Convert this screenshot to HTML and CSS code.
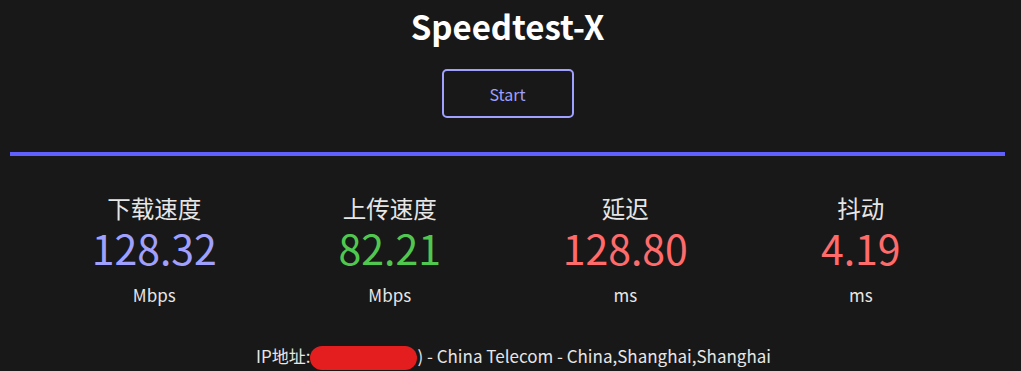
FILE: index.html
```html
<!DOCTYPE html>
<html lang="zh-CN">
<head>
    <meta charset="UTF-8">
    <meta name="viewport" content="width=device-width, initial-scale=1.0">
    <title>Speedtest-X</title>
    <link rel="stylesheet" href="styles.css">
</head>
<body>
    <h1 class="title">Speedtest-X</h1>

    <div class="controls">
        <button type="button" class="start-button">Start</button>
    </div>

    <!-- progress bar -->
    <div class="progress"></div>

    <div class="stats">
        <div class="stat">
            <div class="stat-label">下载速度</div>
            <div class="stat-value download">128.32</div>
            <div class="stat-unit">Mbps</div>
        </div>
        <div class="stat">
            <div class="stat-label">上传速度</div>
            <div class="stat-value upload">82.21</div>
            <div class="stat-unit">Mbps</div>
        </div>
        <div class="stat">
            <div class="stat-label">延迟</div>
            <div class="stat-value ping">128.80</div>
            <div class="stat-unit">ms</div>
        </div>
        <div class="stat">
            <div class="stat-label">抖动</div>
            <div class="stat-value jitter">4.19</div>
            <div class="stat-unit">ms</div>
        </div>
    </div>

    <p class="ip-info">IP地址:<span class="redacted"></span>) - China Telecom - China,Shanghai,Shanghai</p>
</body>
</html>
```

FILE: styles.css
```css
body {
    margin: 0;
    padding: 0 16px 0 10px;
    background-color: #181818;
    color: #e6e6e6;
    font-family: "Noto Sans CJK SC", "Noto Sans", sans-serif;
}
.title {
    margin: 0;
    padding-top: 4px;
    font-size: 33px;
    line-height: 44px;
    font-weight: bold;
    color: #ffffff;
    text-align: center;
}
.controls {
    display: flex;
    justify-content: center;
    margin-top: 21px;
}
.start-button {
    width: 132px;
    height: 49px;
    border: 2px solid #a0a0ff;
    border-radius: 5px;
    background: transparent;
    color: #a0a0ff;
    font-family: inherit;
    font-size: 16px;
    cursor: pointer;
}
.progress {
    margin-top: 34px;
    height: 4px;
    background-color: #6060ff;
}
.stats {
    display: flex;
    width: 942px;
    margin: 37px auto 0;
}
.stat {
    flex: 1;
    text-align: center;
}
.stat-label {
    font-size: 23.5px;
    line-height: 30px;
}
.stat-value {
    font-size: 41px;
    line-height: 48px;
}
.stat-unit {
    margin-top: 13px;
    font-size: 17px;
    line-height: 22px;
}
.download { color: #a0a0ff; }
.upload { color: #50c850; }
.ping { color: #ff6b6b; }
.jitter { color: #ff6b6b; }

.ip-info {
    margin: 39px 0 0;
    padding-left: 12px;
    font-size: 17px;
    line-height: 22px;
    text-align: center;
}
.redacted {
    display: inline-block;
    width: 107px;
    height: 24px;
    vertical-align: middle;
    border-radius: 12px;
    background-color: #e41e1e;
}
```
